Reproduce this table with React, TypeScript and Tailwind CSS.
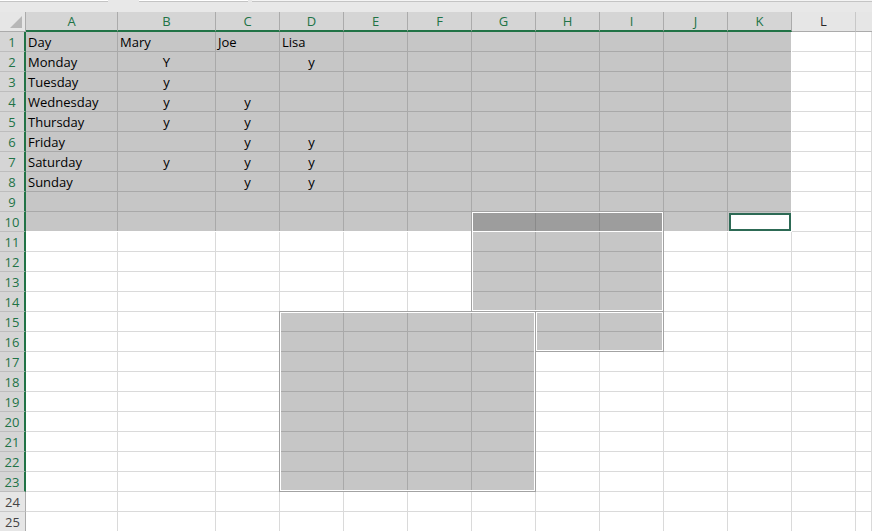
import React from "react";

const COLS = ["A", "B", "C", "D", "E", "F", "G", "H", "I", "J", "K", "L", ""];
const COL_LEFT = [26, 118, 216, 280, 344, 408, 472, 536, 600, 664, 728, 792, 856];
const COL_RIGHT = [117, 215, 279, 343, 407, 471, 535, 599, 663, 727, 791, 855];

// rows 1..8 hold the little schedule
const DATA: Record<number, string[]> = {
  1: ["Day", "Mary", "Joe", "Lisa"],
  2: ["Monday", "Y", "", "y"],
  3: ["Tuesday", "y", "", ""],
  4: ["Wednesday", "y", "y", ""],
  5: ["Thursday", "y", "y", ""],
  6: ["Friday", "", "y", "y"],
  7: ["Saturday", "y", "y", "y"],
  8: ["Sunday", "", "y", "y"],
};

type Range = { c0: number; c1: number; r0: number; r1: number };

const RANGES: Range[] = [
  { c0: 0, c1: 10, r0: 1, r1: 10 },
  { c0: 6, c1: 8, r0: 10, r1: 14 },
  { c0: 7, c1: 8, r0: 15, r1: 16 },
  { c0: 3, c1: 6, r0: 15, r1: 23 },
];

const rowTop = (r: number) => 20 + (r - 1) * 20;

function hits(r: number, c: number) {
  return RANGES.filter((g) => r >= g.r0 && r <= g.r1 && c >= g.c0 && c <= g.c1)
    .length;
}

function Cell({ r, c }: { r: number; c: number }) {
  const n = hits(r, c);
  const tone =
    n === 0
      ? "bg-white border-[#dadada]"
      : n === 1
        ? "bg-[#c6c6c6] border-[#a9a9a9]"
        : "bg-[#9d9d9d] border-[#8a8a8a]";
  const text = DATA[r]?.[c] ?? "";
  const centered = r > 1 && c > 0;
  return (
    <div
      className={`flex h-5 items-center overflow-visible whitespace-nowrap border-r border-b px-[2px] pt-[2px] text-[13px] text-black ${tone} ${
        centered ? "justify-center" : "justify-start"
      }`}
    >
      {text}
    </div>
  );
}

function CornerCell() {
  return (
    <div className="relative h-5 border-r border-b border-[#ababab] bg-[#e6e6e6]">
      <svg
        className="absolute left-[9px] top-[4px]"
        width="14"
        height="13"
        viewBox="0 0 14 13"
      >
        <polygon points="13,0 13,12 1,12" fill="#b7b7b7" />
      </svg>
    </div>
  );
}

export default function App() {
  const rows = Array.from({ length: 25 }, (_, i) => i + 1);

  return (
    <div
      className="h-[531px] w-[872px] overflow-hidden bg-white"
      style={{ fontFamily: '"Open Sans", "Noto Sans", sans-serif' }}
    >
      {/* formula bar remnants */}
      <div className="flex h-3 items-start bg-[#e8e8e8]">
        <div className="h-[2px] w-[108px] border-b border-[#c4c4c4] bg-white" />
        <div className="ml-[31px] h-[2px] w-[109px] border-b border-[#c4c4c4] bg-white" />
        <div className="ml-[4px] h-[2px] flex-1 border-b border-[#c4c4c4] bg-[#f4f4f4]" />
      </div>

      <div className="relative grid grid-cols-[26px_92px_98px_repeat(10,64px)_1fr]">
        <CornerCell />
        {COLS.map((label, c) => {
          const sel = c <= 10;
          return (
            <div
              key={c}
              className={`flex h-5 items-center justify-center pt-px text-[13px] ${
                sel
                  ? "border-r border-b-2 border-r-[#ababab] border-b-[#217346] bg-[#d5d5d5] text-[#217346]"
                  : "border-r border-b border-r-[#c8c8c8] border-b-[#ababab] bg-[#e6e6e6] text-[#262626]"
              } ${c === 12 ? "border-r-0" : ""}`}
            >
              {label}
            </div>
          );
        })}

        {rows.map((r) => (
          <React.Fragment key={r}>
            <div
              className={`flex h-5 items-center justify-center border-b pt-[2px] text-[13px] ${
                r <= 23
                  ? "border-r-2 border-r-[#217346] border-b-[#bdbdbd] bg-[#d5d5d5] text-[#217346]"
                  : "border-r border-r-[#ababab] border-b-[#c8c8c8] bg-[#e6e6e6] text-[#444]"
              }`}
            >
              {r}
            </div>
            {COLS.map((_, c) => (
              <Cell key={c} r={r} c={c} />
            ))}
          </React.Fragment>
        ))}

        {/* selection outlines */}
        {RANGES.map((g, i) =>
          i === 0 ? (
            <div
              key={i}
              className="pointer-events-none absolute border-r border-b border-white"
              style={{
                left: COL_LEFT[g.c0],
                top: rowTop(g.r0),
                width: COL_RIGHT[g.c1] - COL_LEFT[g.c0] + 1,
                height: (g.r1 - g.r0 + 1) * 20,
              }}
            />
          ) : (
            <div
              key={i}
              className="pointer-events-none absolute border border-white outline outline-[#a3a3a3]"
              style={{
                left: COL_LEFT[g.c0],
                top: rowTop(g.r0),
                width: COL_RIGHT[g.c1] - COL_LEFT[g.c0],
                height: (g.r1 - g.r0 + 1) * 20 - 1,
              }}
            />
          )
        )}

        {/* active cell K10 */}
        <div
          className="pointer-events-none absolute h-[18px] w-[62px] border-2 border-[#2d6a55] bg-white"
          style={{ left: COL_LEFT[10] + 1, top: rowTop(10) + 1 }}
        />
      </div>
    </div>
  );
}
